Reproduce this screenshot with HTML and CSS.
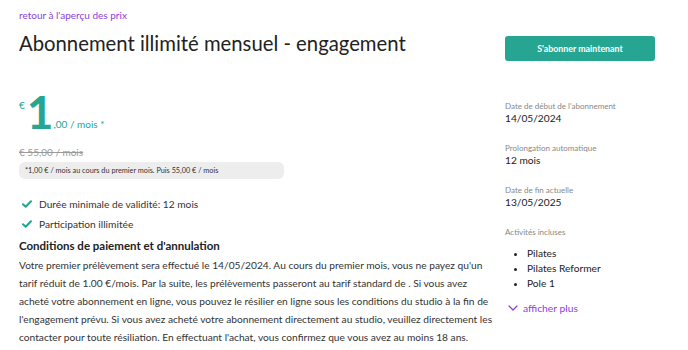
FILE: index.html
```html
<!DOCTYPE html>
<html lang="fr">
<head>
<meta charset="utf-8">
<link rel="stylesheet" href="styles.css">
</head>
<body>
<div class="page">
  <a class="back" href="#">retour à l'aperçu des prix</a>
  <div class="cols">
    <main class="main">
      <h1 class="title">Abonnement illimité mensuel - engagement</h1>
      <div class="price">
        <span class="cur">€</span><span class="big">1</span><span class="rest">,00 / mois *</span>
      </div>
      <div class="old">€ 55,00 / mois</div>
      <div class="note">*1,00 € / mois au cours du premier mois. Puis 55,00 € / mois</div>
      <ul class="checks">
        <li><svg class="chk" viewBox="0 0 10 8" width="10" height="8"><path d="M1 4.2 L3.7 6.8 L9 1.2" fill="none" stroke="#26a592" stroke-width="2" stroke-linecap="round" stroke-linejoin="round"/></svg>Durée minimale de validité: 12 mois</li>
        <li><svg class="chk" viewBox="0 0 10 8" width="10" height="8"><path d="M1 4.2 L3.7 6.8 L9 1.2" fill="none" stroke="#26a592" stroke-width="2" stroke-linecap="round" stroke-linejoin="round"/></svg>Participation illimitée</li>
      </ul>
      <h2 class="sub">Conditions de paiement et d'annulation</h2>
      <p class="para">Votre premier prélèvement sera effectué le 14/05/2024. Au cours du premier mois, vous ne payez qu'un tarif réduit de 1.00 €/mois. Par la suite, les prélèvements passeront au tarif standard de . Si vous avez acheté votre abonnement en ligne, vous pouvez le résilier en ligne sous les conditions du studio à la fin de l'engagement prévu. Si vous avez acheté votre abonnement directement au studio, veuillez directement les contacter pour toute résiliation. En effectuant l'achat, vous confirmez que vous avez au moins 18 ans.</p>
    </main>
    <aside class="side">
      <button class="cta">S'abonner maintenant</button>
      <div class="info">
        <div class="lbl">Date de début de l'abonnement</div>
        <div class="val">14/05/2024</div>
      </div>
      <div class="info">
        <div class="lbl">Prolongation automatique</div>
        <div class="val">12 mois</div>
      </div>
      <div class="info">
        <div class="lbl">Date de fin actuelle</div>
        <div class="val">13/05/2025</div>
      </div>
      <div class="info">
        <div class="lbl">Activités incluses</div>
        <ul class="acts">
          <li>Pilates</li>
          <li>Pilates Reformer</li>
          <li>Pole 1</li>
        </ul>
      </div>
      <a class="more" href="#"><svg viewBox="0 0 10 6" width="10" height="6"><path d="M1 1 L5 5 L9 1" fill="none" stroke="#8b3fd9" stroke-width="1.2" stroke-linecap="round" stroke-linejoin="round"/></svg>afficher plus</a>
    </aside>
  </div>
</div>
</body>
</html>
```
FILE: styles.css
```css
* { box-sizing: border-box; }
html, body { margin: 0; padding: 0; background: #fff; }
body { font-family: Lato, "Noto Sans", sans-serif; color: #222; overflow: hidden; }
.page { padding: 8px 32px 0 19px; }
.back { display: block; color: #8b3fd9; font-size: 10px; text-decoration: none; line-height: 14px; }
.cols { display: flex; gap: 12px; }
.main { flex: 1; min-width: 0; }
.title { font-size: 20.3px; font-weight: 400; margin: 8px 0 0; line-height: 26px; color: #222; }
.price { display: flex; align-items: flex-end; margin-top: 38px; color: #26a592; height: 36px; }
.cur { font-size: 10px; align-self: flex-start; margin-top: 5px; margin-right: 2px; }
.big { font-size: 46px; font-weight: 700; line-height: 36px; letter-spacing: -1px; }
.rest { font-size: 10px; margin-left: 1px; line-height: 12px; margin-bottom: 0; }
.old { color: #9a9a9a; font-size: 10px; text-decoration: line-through; margin-top: 15px; line-height: 14px; }
.note { background: #ededed; border-radius: 6px; font-size: 7.3px; color: #333; padding: 0 6px; height: 17px; line-height: 17px; width: 265px; margin-top: 3px; }
.checks { list-style: none; margin: 15px 0 0; padding: 0; }
.checks li { display: flex; align-items: center; font-size: 10.2px; line-height: 20px; color: #333; }
.chk { margin: 0 7px 0 3px; }
.sub { font-size: 11.5px; font-weight: 700; margin: 3px 0 0; line-height: 18px; color: #222; }
.para { font-size: 10.2px; line-height: 18px; margin: 1px 0 0; color: #333; }
.side { width: 151px; flex: none; padding-top: 14px; }
.cta { display: block; width: 150px; height: 25px; background: #26a592; color: #fff; border: 0; border-radius: 3px; font-family: inherit; font-size: 8.8px; font-weight: 700; padding: 0; }
.info:first-of-type { margin-top: 40px; }
.info + .info { margin-top: 17px; }
.lbl { font-size: 8px; color: #888; line-height: 10px; }
.val { font-size: 10.2px; color: #222; line-height: 15px; }
.acts { margin: 9px 0 0; padding-left: 22px; font-size: 10.2px; line-height: 15px; color: #222; }
.more { display: flex; align-items: center; gap: 5px; color: #8b3fd9; font-size: 10.3px; text-decoration: none; margin-top: 11px; padding-left: 3px; }
```
